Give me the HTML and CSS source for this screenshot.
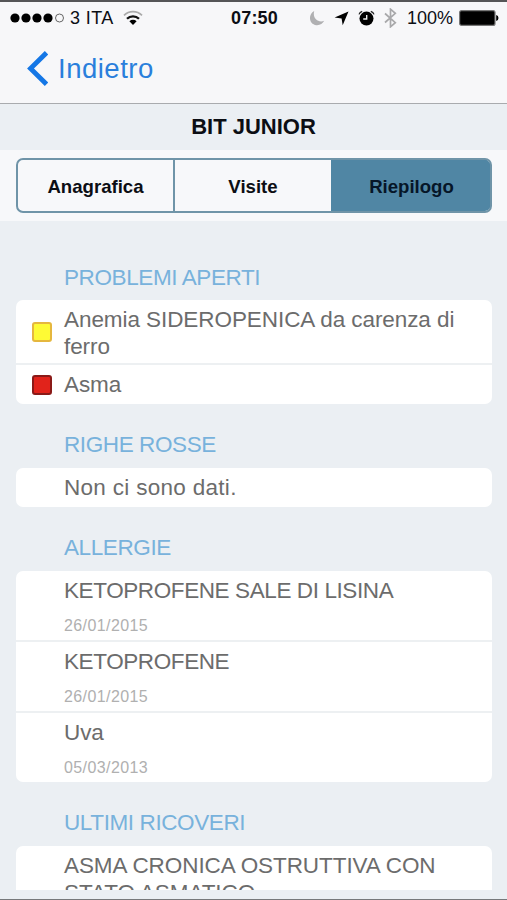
FILE: index.html
```html
<!DOCTYPE html>
<html lang="it">
<head>
    <meta charset="UTF-8">
    <meta name="viewport" content="width=device-width, initial-scale=1.0">
    <title>BIT JUNIOR - Riepilogo</title>
    <link rel="stylesheet" href="styles.css">
</head>
<body>
    <header class="status-bar">
        <div class="status-left">
            <svg class="signal" width="54" height="12" viewBox="0 0 54 12">
                <circle cx="5" cy="6" r="4.6"/>
                <circle cx="16" cy="6" r="4.6"/>
                <circle cx="27" cy="6" r="4.6"/>
                <circle cx="38" cy="6" r="4.6"/>
                <circle cx="49.5" cy="6" r="4" fill="none" stroke="#666" stroke-width="1"/>
            </svg>
            <span class="carrier">3 ITA</span>
            <svg class="wifi" width="20" height="16" viewBox="0 0 20 16">
                <path d="M1 5.3a12.8 12.8 0 0 1 18 0" fill="none" stroke="#aaa" stroke-width="1.7"/>
                <path d="M4 8.8a8.5 8.5 0 0 1 12 0" fill="none" stroke="#111" stroke-width="2.3"/>
                <path d="M6.4 11.3a5.2 5.2 0 0 1 7.2 0L10 15z" fill="#000"/>
            </svg>
        </div>
        <span class="clock">07:50</span>
        <div class="status-right">
            <svg width="16" height="16" viewBox="0 0 16 16">
                <path d="M5.2 1C-1 4-.5 14.5 7.5 15.2c3.6.2 6.200-1.500 7.700-4.400C9.500 13.200 3.200 8.500 5.200 1z" fill="#b0b0b2"/>
            </svg>
            <svg class="location" width="15" height="15" viewBox="0 0 15 15">
                <path d="M14.5 .6L8.7 14.2 7.6 7.5.6 6.4z"/>
            </svg>
            <svg class="alarm" width="17" height="17" viewBox="0 0 17 17">
                <path d="M1 4.4Q1.8 2.2 4.2 1.4M12.8 1.4Q15.2 2.2 16 4.4" fill="none" stroke="#222" stroke-width="1.3"/>
                <circle cx="8.5" cy="8.6" r="7"/>
                <path d="M8.7 5v4H5.2" fill="none" stroke="#eee" stroke-width="1.4"/>
            </svg>
            <svg class="bluetooth" width="13" height="20" viewBox="0 0 13 20">
                <path d="M1 5.5l10.3 9.2L6.5 18.8V1.2l4.8 4.1L1 14.5" fill="none" stroke="#a8a8aa" stroke-width="1.7"/>
            </svg>
            <span class="percent">100%</span>
            <svg class="battery" width="40" height="16" viewBox="0 0 40 16">
                <rect x=".6" y=".6" width="35.4" height="14.8" rx="2" fill="#000" stroke="#777" stroke-width="1.2"/>
                <path d="M37.2 5v6q2.3-.7 2.3-3t-2.3-3z"/>
            </svg>
        </div>
    </header>

    <nav>
        <a href="#" class="back">
            <svg width="21" height="35" viewBox="0 0 21 35">
                <path d="M19.500 1.800L3.500 17.500l16 15.700" fill="none" stroke="#1577e6" stroke-width="4.800"/>
            </svg>
            <span>Indietro</span>
        </a>
    </nav>

    <h1>BIT JUNIOR</h1>

    <div class="tabs">
        <div class="segments">
            <a href="#">Anagrafica</a>
            <a href="#">Visite</a>
            <a href="#" class="active">Riepilogo</a>
        </div>
    </div>

    <main>
        <h2>PROBLEMI APERTI</h2>
        <ul class="card">
            <li class="wrap"><i class="marker yellow"></i><p>Anemia SIDEROPENICA da carenza di ferro</p></li>
            <li><i class="marker red"></i><p>Asma</p></li>
        </ul>

        <h2>RIGHE ROSSE</h2>
        <ul class="card">
            <li><p class="empty">Non ci sono dati.</p></li>
        </ul>

        <h2>ALLERGIE</h2>
        <ul class="card dated">
            <li><p class="drug">KETOPROFENE SALE DI LISINA</p><time>26/01/2015</time></li>
            <li><p class="drug">KETOPROFENE</p><time>26/01/2015</time></li>
            <li><p>Uva</p><time>05/03/2013</time></li>
        </ul>

        <h2>ULTIMI RICOVERI</h2>
        <ul class="card">
            <li><p>ASMA CRONICA OSTRUTTIVA CON STATO ASMATICO</p></li>
        </ul>
    </main>
</body>
</html>
```
FILE: styles.css
```css
* {
    box-sizing: border-box;
}

body {
    display: flex;
    flex-direction: column;
    height: 900px;
    margin: 0;
    overflow: hidden;
    font-family: "Liberation Sans", Arial, sans-serif;
    background: #ebeff3;
    border-top: 2px solid #555557;
    border-bottom: 1px solid #77797b;
    color: #0c0e14;
}

a {
    color: inherit;
    text-decoration: none;
}

svg {
    display: block;
    flex: none;
}

.status-bar {
    display: grid;
    grid-template-columns: 1fr auto 1fr;
    align-items: center;
    height: 32px;
    padding: 0 8px 0 10px;
    background: #f7f7f9;
    font-size: 18px;
}

.status-left,
.status-right {
    display: flex;
    align-items: center;
}

.status-right {
    justify-content: flex-end;
}

.carrier {
    margin: 0 9px 0 6px;
    letter-spacing: 0.4px;
}

.clock {
    font-weight: bold;
    letter-spacing: 0.2px;
}

.location {
    margin-left: 9px;
}

.alarm {
    margin-left: 9px;
}

.bluetooth {
    margin: 0 10px 0 9px;
}

.percent {
    margin-right: 6px;
}

nav {
    height: 70px;
    padding: 17px 27px;
    background: #f7f7f9;
    border-bottom: 1px solid #a9abae;
}

.back {
    display: flex;
    align-items: center;
    gap: 10px;
    height: 35px;
    color: #2a7fdc;
    font-size: 27.5px;
    letter-spacing: 0.5px;
}

h1 {
    flex: none;
    height: 46px;
    margin: 0;
    font-size: 22px;
    line-height: 46px;
    text-align: center;
}

.tabs {
    flex: none;
    height: 71px;
    padding: 8px 15px 8px 16px;
    background: #f7f8fa;
}

.segments {
    display: grid;
    grid-template-columns: 155px 158px 1fr;
    height: 55px;
    overflow: hidden;
    border: 2px solid #6f94a8;
    border-radius: 7px;
}

.segments a {
    font-size: 18.6px;
    font-weight: bold;
    line-height: 53px;
    text-align: center;
}

.segments a + a {
    border-left: 2px solid #6f94a8;
}

.segments .active {
    background: #5086a4;
    border-color: #5086a4;
    box-shadow: 0 0 0 2px #5086a4;
    clip-path: inset(-2px -2px -2px 0);
    color: #061628;
}

main {
    flex: 1;
    margin-bottom: 9px;
    padding: 39.6px 15px 0 16px;
    overflow: hidden;
}

h2 {
    height: 39.8px;
    margin: 0;
    padding: 3px 0 0 48px;
    color: #78b2dc;
    font-size: 22.5px;
    font-weight: normal;
    letter-spacing: -0.4px;
    line-height: 27px;
}

.card {
    margin: 0 0 24px;
    padding: 0;
    overflow: hidden;
    background: #fff;
    border-radius: 7px;
    color: #6c6c6c;
    font-size: 22.5px;
    line-height: 27px;
    list-style: none;
}

.card li {
    position: relative;
    min-height: 39px;
    padding: 6px 24px 6px 48px;
}

.card .wrap {
    padding-bottom: 3px;
}

.card li + li {
    border-top: 2px solid #edf0f2;
    min-height: 41px;
}

.card p {
    margin: 0;
    letter-spacing: -0.07px;
}

.card .empty {
    letter-spacing: 0.3px;
}

.card .drug {
    letter-spacing: -0.4px;
}

.marker {
    position: absolute;
    top: 50%;
    left: 16px;
    width: 20px;
    height: 20px;
    margin-top: -10px;
    border: 2px solid;
    border-radius: 3px;
}

.yellow {
    background: #fefb35;
    border-color: #e5b73e;
}

.red {
    background: #e1231b;
    border-color: #8a1a18;
}

.dated li {
    height: 69px;
}

.dated li + li {
    height: 71px;
}

time {
    display: block;
    margin-top: 8px;
    color: #b0b0b0;
    font-size: 16px;
    letter-spacing: 0.4px;
    line-height: 27px;
}
```
